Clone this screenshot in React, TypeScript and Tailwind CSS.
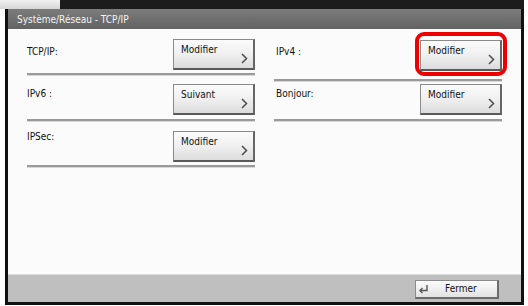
const font = "font-['DejaVu_Sans_Condensed','DejaVu_Sans',sans-serif]";

function Chevron() {
  return (
    <svg
      className="absolute bottom-[4px] right-[5px]"
      width="7"
      height="11"
      viewBox="0 0 7 11"
      aria-hidden="true"
    >
      <polyline points="1,1 5.5,5.5 1,10" fill="none" stroke="#4d4d4d" strokeWidth="1.5" />
    </svg>
  );
}

function PanelButton({ label, highlighted = false }: { label: string; highlighted?: boolean }) {
  return (
    <div className="relative">
      {highlighted ? (
        <div className="absolute -bottom-[5px] -left-[5px] -right-[5px] -top-[8px] rounded-[9px] border-[4px] border-[#ee0000]" />
      ) : null}
      <button
        type="button"
        className="relative block h-[31px] w-[82px] border border-b-[2px] border-r-[2px] border-[#8a8a8a] border-b-[#595959] border-r-[#666] bg-linear-to-b from-[#fbfbfb] via-[#f0f0f0] to-[#dcdcdc]"
      >
        <span className="absolute left-[7px] top-[4px] text-[10px] leading-[12px] text-[#111]">
          {label}
        </span>
        <Chevron />
      </button>
    </div>
  );
}

function Divider() {
  return <div className="h-[3px] border-t-2 border-b border-t-[#9a9a9a] border-b-[#d8d8d8]" />;
}

type Row = {
  label: string;
  button: string;
  pt: string;
  labelMt: string;
  gap: string;
  highlighted?: boolean;
};

const leftRows: Row[] = [
  { label: "TCP/IP:", button: "Modifier", pt: "pt-[10px]", labelMt: "mt-[7px]", gap: "h-[3px]" },
  { label: "IPv6 :", button: "Suivant", pt: "pt-[8px]", labelMt: "mt-[4px]", gap: "h-[4px]" },
  { label: "IPSec:", button: "Modifier", pt: "pt-[9px]", labelMt: "mt-[0px]", gap: "h-[3px]" }
];

const rightRows: Row[] = [
  {
    label: "IPv4 :",
    button: "Modifier",
    pt: "pt-[11px]",
    labelMt: "mt-[6px]",
    gap: "h-[8px]",
    highlighted: true
  },
  { label: "Bonjour:", button: "Modifier", pt: "pt-[2px]", labelMt: "mt-[4px]", gap: "h-[4px]" }
];

function Column({ rows, labelPad }: { rows: Row[]; labelPad: string }) {
  return (
    <div className="flex w-[228px] flex-col">
      {rows.map((row) => (
        <div key={row.label} className={row.pt}>
          <div className="flex items-start justify-between">
            <span className={`${row.labelMt} ${labelPad} text-[10px] leading-[12px] text-[#111]`}>
              {row.label}
            </span>
            <PanelButton label={row.button} highlighted={row.highlighted} />
          </div>
          <div className={row.gap} />
          <Divider />
        </div>
      ))}
    </div>
  );
}

function ReturnIcon() {
  return (
    <svg width="11" height="10" viewBox="0 0 11 10" aria-hidden="true">
      <path d="M9 1 V6.5 H2.5" fill="none" stroke="#555" strokeWidth="1.4" />
      <path d="M4.5 4 L2 6.5 L4.5 9" fill="none" stroke="#555" strokeWidth="1.4" />
    </svg>
  );
}

export default function App() {
  return (
    <div className={`${font} h-[306px] w-[528px] overflow-hidden bg-white`}>
      <div className="flex h-[9px]">
        <div className="w-[60px] bg-linear-to-b from-[#f2f2f2] to-[#d6d6d6]" />
        <div className="w-[464px] bg-[#1c1c1c]" />
      </div>

      <div className="ml-[5px] w-[519px] border-x-[3px] border-b-[3px] border-[#111]">
        <div className="flex h-[20px] items-center bg-linear-to-b from-[#7c7c7c] to-[#626262] pl-[9px] text-[10px] text-[#f4f4f4]">
          Système/Réseau - TCP/IP
        </div>

        <div className="flex h-[245px] gap-[19px] bg-[#fbfbfb] px-[19px]">
          <Column rows={leftRows} labelPad="pl-0" />
          <Column rows={rightRows} labelPad="pl-[2px]" />
        </div>

        <div className="flex h-[28px] items-center justify-end border-t border-[#dedede] bg-[#bfbfbf] pr-[22px]">
          <button
            type="button"
            className="mt-[2px] flex h-[19px] w-[84px] items-center border border-b-[2px] border-r-[2px] border-[#8a8a8a] border-b-[#6a6a6a] border-r-[#6a6a6a] bg-linear-to-b from-[#fbfbfb] to-[#e2e2e2] pl-[2px]"
          >
            <ReturnIcon />
            <span className="ml-[16px] text-[10px] leading-[12px] text-[#111]">Fermer</span>
          </button>
        </div>
      </div>
    </div>
  );
}
